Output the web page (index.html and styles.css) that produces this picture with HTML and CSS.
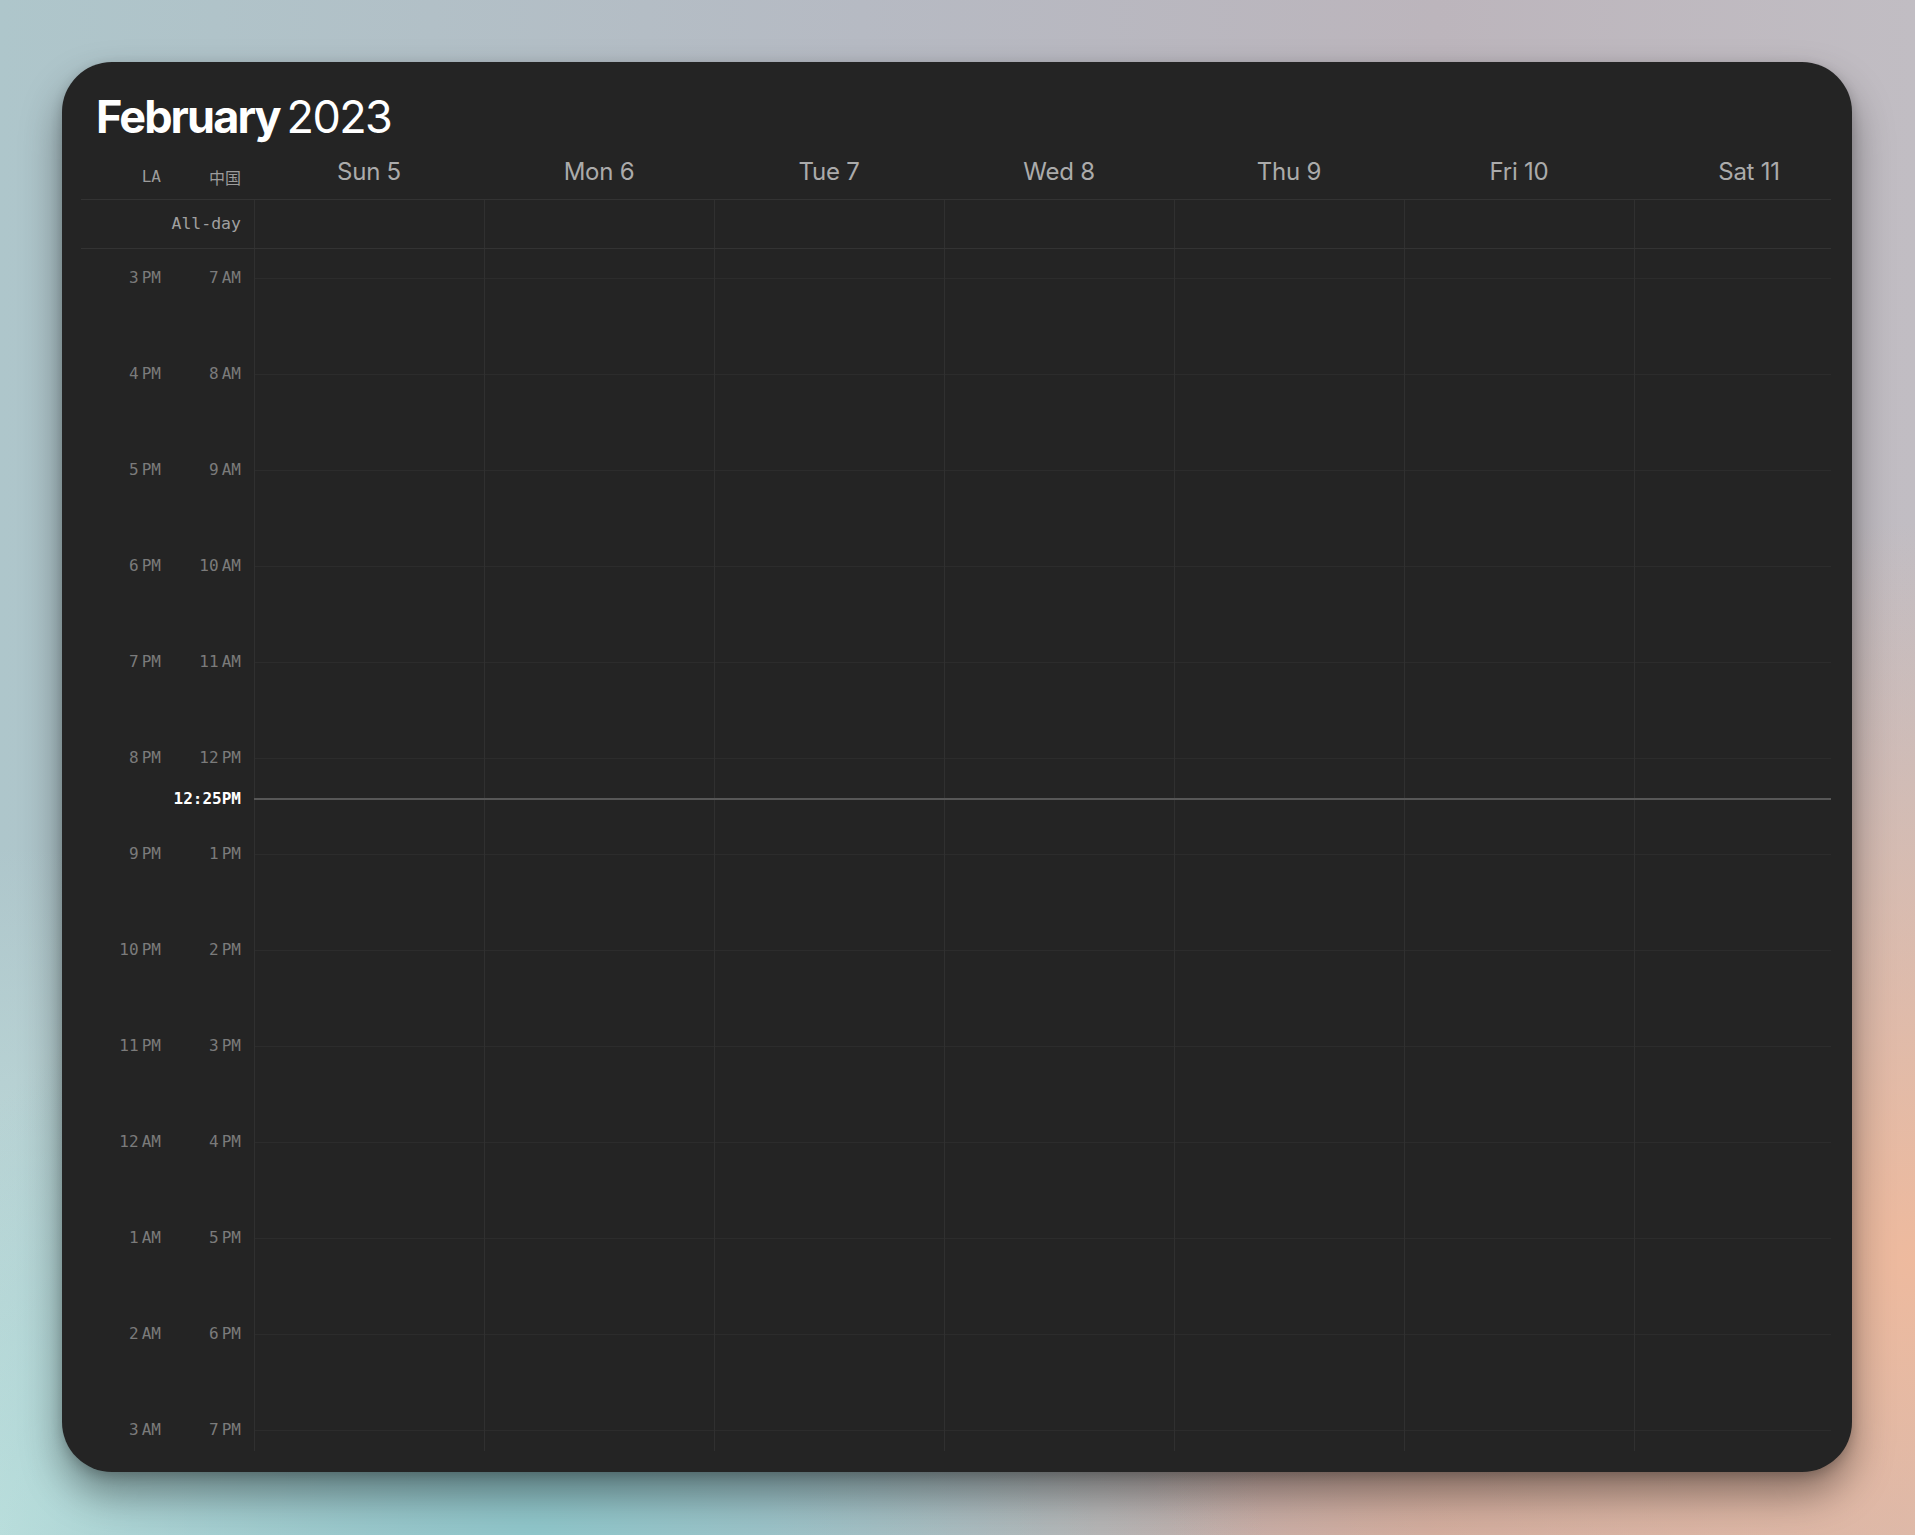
FILE: index.html
```html
<!DOCTYPE html>
<html lang="en">
<head>
<meta charset="utf-8">
<title>February 2023</title>
<link rel="stylesheet" href="styles.css">
</head>
<body>
<main class="card">
  <h1 class="title"><b>February</b> <span>2023</span></h1>
  <div class="cal">
    <div class="row head">
      <div class="gutter"><span class="tz">LA</span><span class="tz cjk">中国</span></div>
      <div class="dh">Sun 5</div>
      <div class="dh">Mon 6</div>
      <div class="dh">Tue 7</div>
      <div class="dh">Wed 8</div>
      <div class="dh">Thu 9</div>
      <div class="dh">Fri 10</div>
      <div class="dh">Sat 11</div>
    </div>
    <div class="row allday">
      <div class="gutter"><span class="allday-label">All-day</span></div>
      <div class="col"></div>
      <div class="col"></div>
      <div class="col"></div>
      <div class="col"></div>
      <div class="col"></div>
      <div class="col"></div>
      <div class="col"></div>
    </div>
    <div class="row body">
      <div class="gutter times">
        <div class="spacer"></div>
        <div class="trow"><span>3 PM</span><span>7 AM</span></div>
        <div class="trow"><span>4 PM</span><span>8 AM</span></div>
        <div class="trow"><span>5 PM</span><span>9 AM</span></div>
        <div class="trow"><span>6 PM</span><span>10 AM</span></div>
        <div class="trow"><span>7 PM</span><span>11 AM</span></div>
        <div class="trow"><span>8 PM</span><span>12 PM</span></div>
        <div class="trow"><span>9 PM</span><span>1 PM</span></div>
        <div class="trow"><span>10 PM</span><span>2 PM</span></div>
        <div class="trow"><span>11 PM</span><span>3 PM</span></div>
        <div class="trow"><span>12 AM</span><span>4 PM</span></div>
        <div class="trow"><span>1 AM</span><span>5 PM</span></div>
        <div class="trow"><span>2 AM</span><span>6 PM</span></div>
        <div class="trow"><span>3 AM</span><span>7 PM</span></div>
      </div>
      <div class="col day"></div>
      <div class="col day"></div>
      <div class="col day"></div>
      <div class="col day"></div>
      <div class="col day"></div>
      <div class="col day"></div>
      <div class="col day"></div>
      <div class="now" style="top: 549px;"><span class="now-label">12:25PM</span><span class="now-line"></span></div>
    </div>
  </div>
</main>
</body>
</html>
```

FILE: styles.css
```css
* { box-sizing: border-box; }

html, body {
  margin: 0;
  width: 1915px;
  height: 1535px;
  overflow: hidden;
}

body {
  font-family: "Inter", "Noto Sans", sans-serif;
  background:
    radial-gradient(ellipse 42% 48% at 100% 82%, rgba(238, 186, 158, 1) 0%, rgba(238, 186, 158, 0) 100%),
    radial-gradient(ellipse 38% 42% at 28% 100%, rgba(143, 198, 202, 1) 0%, rgba(143, 198, 202, 0) 100%),
    radial-gradient(ellipse 30% 45% at 0% 100%, rgba(200, 230, 226, 1) 0%, rgba(200, 230, 226, 0) 100%),
    radial-gradient(ellipse 35% 40% at 75% 100%, rgba(200, 168, 158, 1) 0%, rgba(200, 168, 158, 0) 100%),
    linear-gradient(to right, #aec6cb 0%, #b6bac3 45%, #bcb5bc 75%, #c1bdc3 100%);
}

.card {
  margin: 62px 63px 63px 62px;
  width: 1790px;
  height: 1410px;
  border-radius: 50px;
  background: #242424;
  box-shadow: 0 22px 40px rgba(0, 0, 0, 0.4), 0 4px 12px rgba(0, 0, 0, 0.18);
  padding: 32px 21px 21px 19px;
  display: flex;
  flex-direction: column;
}

.title {
  margin: 0;
  padding-left: 15px;
  height: 45px;
  font-size: 45px;
  line-height: 45px;
  color: #ffffff;
  letter-spacing: -0.042em;
  word-spacing: -2px;
  white-space: nowrap;
}

.title b { font-weight: 700; }
.title span { font-weight: 400; letter-spacing: -0.035em; }

.cal {
  width: 1750px;
  flex: 1;
  min-height: 0;
  overflow: hidden;
  display: flex;
  flex-direction: column;
}

.row {
  display: grid;
  grid-template-columns: 173px repeat(7, 230px);
  width: 1783px;
}

.gutter {
  display: grid;
  grid-template-columns: 80px 80px;
  padding-right: 13px;
  font-family: "DejaVu Sans Mono", monospace;
  font-size: 16px;
  line-height: 16px;
  text-align: right;
}

.head {
  height: 61px;
  flex: none;
  border-bottom: 1px solid #333333;
  align-items: end;
  padding-bottom: 15px;
}

.head .gutter { align-items: end; }

.tz { color: #9c9c9c; margin-bottom: -1px; }
.cjk { font-family: "DejaVu Sans Mono", "Noto Sans CJK SC", monospace; margin-bottom: -3px; }

.dh {
  text-align: center;
  font-size: 24px;
  line-height: 24px;
  color: #ababab;
  letter-spacing: -0.01em;
}

.allday {
  height: 49px;
  flex: none;
  border-bottom: 1px solid #333333;
}

.allday .gutter { align-items: center; }

.allday-label {
  grid-column: 1 / 3;
  color: #a0a0a0;
  font-size: 16.5px;
}

.col {
  border-left: 1px solid #303030;
}

.body {
  flex: 1;
  min-height: 0;
  position: relative;
  overflow: hidden;
  grid-template-rows: 100%;
}

.times {
  display: flex;
  flex-direction: column;
  color: #7b7b7b;
  word-spacing: -6.5px;
}

.times .spacer { height: 21px; flex: none; }

.trow {
  height: 96px;
  flex: none;
  display: grid;
  grid-template-columns: 80px 80px;
  align-items: start;
}

.day {
  background-image: linear-gradient(to bottom, #2c2c2c 0, #2c2c2c 1px, transparent 1px);
  background-size: 100% 96px;
  background-repeat: repeat-y;
  background-position: 0 29px;
}

.now {
  position: absolute;
  left: 0;
  right: 0;
  height: 2px;
  display: flex;
  align-items: center;
}

.now-label {
  width: 173px;
  flex: none;
  padding-right: 13px;
  text-align: right;
  font-family: "DejaVu Sans Mono", monospace;
  font-weight: 700;
  font-size: 16px;
  line-height: 16px;
  color: #ffffff;
}

.now-line {
  flex: 1;
  height: 2px;
  background: #575757;
}
```
